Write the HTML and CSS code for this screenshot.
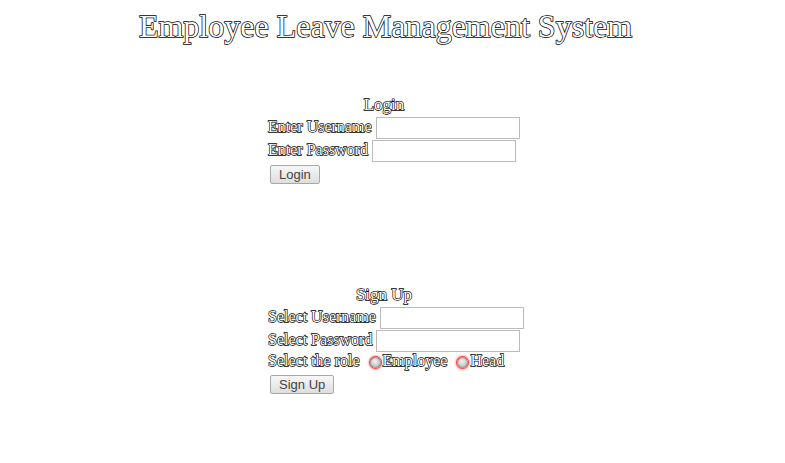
FILE: index.html
```html
<!DOCTYPE html>
<html>
<head>
<meta charset="utf-8">
<title>Employee Leave Management System</title>
<link rel="stylesheet" href="styles.css">
</head>
<body>
<h1 class="title">Employee Leave Management System</h1>
<form class="panel login">
  <div class="panel-title">Login</div>
  <div class="row">Enter Username <input type="text" class="field"></div>
  <div class="row">Enter Password <input type="password" class="field"></div>
  <div class="row"><button type="button" class="btn">Login</button></div>
</form>
<form class="panel signup">
  <div class="panel-title">Sign Up</div>
  <div class="row">Select Username <input type="text" class="field"></div>
  <div class="row">Select Password <input type="password" class="field"></div>
  <div class="row role">Select the role <input type="radio" name="role" class="radio">Employee <input type="radio" name="role" class="radio">Head</div>
  <div class="row"><button type="button" class="btn">Sign Up</button></div>
</form>
</body>
</html>
```
FILE: styles.css
```css
body {
  margin: 8px;
  background: #fff;
  font-family: "Liberation Serif", "Times New Roman", serif;
  font-size: 16px;
  color: #fff;
  -webkit-text-stroke: 1.3px #000;
  paint-order: stroke fill;
}
.title {
  font-size: 32px;
  font-weight: normal;
  margin: 0 14px 0 0;
  text-align: center;
  line-height: 37px;
  -webkit-text-stroke: 1.5px #000;
}
.panel {
  padding-left: 260px;
}
.login { margin-top: 50px; }
.signup { margin-top: 101px; }
.panel-title {
  width: 232px;
  text-align: center;
  font-size: 17px;
  line-height: 20px;
}
.row {
  line-height: 23px;
  height: 23px;
}
.row.role {
  height: 20px;
  line-height: 20px;
}
.field {
  width: 140px;
  height: 18px;
  border: 1px solid #bbb;
  padding: 1px 1px;
  vertical-align: middle;
  margin: 0;
}
.btn {
  font-family: "Liberation Sans", Arial, sans-serif;
  font-size: 13px;
  color: #444;
  -webkit-text-stroke: 0;
  background: linear-gradient(#f7f7f7, #dedede);
  border: 1px solid #a9a9a9;
  border-radius: 2px;
  padding: 1px 8px;
  margin-left: 2px;
  height: 19px;
  line-height: 15px;
  vertical-align: middle;
}
.radio {
  appearance: none;
  -webkit-appearance: none;
  width: 11px;
  height: 11px;
  border-radius: 50%;
  border: 1px solid #888;
  background: radial-gradient(circle at 45% 40%, #f2f2f2, #b0b0b0);
  box-shadow: 0 0 0 1px #f44, 0 0 2px 2px #fbb;
  margin: 0 2px 0 6px;
  vertical-align: -2px;
}
```
